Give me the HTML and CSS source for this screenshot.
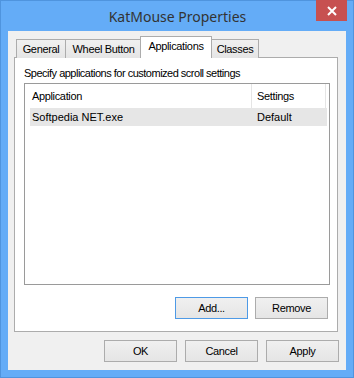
FILE: index.html
```html
<!DOCTYPE html>
<html lang="en">
<head>
    <meta charset="UTF-8">
    <title>KatMouse Properties</title>
    <link rel="stylesheet" href="styles.css">
</head>
<body>
    <div class="window">
        <div class="titlebar">
            <span class="title">KatMouse Properties</span>
            <button class="close-btn" aria-label="Close">
                <svg width="10" height="10" viewBox="0 0 10 10">
                    <path d="M1 1 L9 9 M9 1 L1 9" stroke="#fff" stroke-width="2" fill="none"/>
                </svg>
            </button>
        </div>
        <div class="client">
            <div class="tabs">
                <div class="tab tab-general">General</div>
                <div class="tab tab-wheel">Wheel Button</div>
                <div class="tab tab-apps active">Applications</div>
                <div class="tab tab-classes">Classes</div>
            </div>
            <div class="panel">
                <p class="hint">Specify applications for customized scroll settings</p>
                <div class="listview">
                    <div class="lv-header">
                        <div class="lv-col col-app">Application</div>
                        <div class="lv-col col-set">Settings</div>
                    </div>
                    <div class="lv-row selected">
                        <div class="lv-cell cell-app">Softpedia NET.exe</div>
                        <div class="lv-cell cell-set">Default</div>
                    </div>
                </div>
                <div class="panel-buttons">
                    <button class="btn default">Add...</button>
                    <button class="btn">Remove</button>
                </div>
            </div>
            <div class="dialog-buttons">
                <button class="btn">OK</button>
                <button class="btn">Cancel</button>
                <button class="btn">Apply</button>
            </div>
        </div>
    </div>
</body>
</html>
```

FILE: styles.css
```css
body {
    margin: 0;
    padding: 0;
    font-family: "Liberation Sans", Arial, sans-serif;
    font-size: 11px;
    letter-spacing: -0.35px;
    color: #000;
    background-color: #64acf7;
}
.window {
    width: 354px;
    height: 378px;
    box-sizing: border-box;
    border: 1px solid #4f94de;
    background-color: #64acf7;
    display: flex;
    flex-direction: column;
}
.titlebar {
    position: relative;
    height: 30px;
    display: flex;
    justify-content: center;
    align-items: center;
}
.title {
    font-family: "Noto Sans", sans-serif;
    font-size: 14px;
    letter-spacing: 0;
    color: #333;
    margin-left: 1px;
}
.close-btn {
    position: absolute;
    top: -1px;
    right: 6px;
    width: 31px;
    height: 21px;
    border: none;
    padding: 0;
    background-color: #c75050;
    display: flex;
    justify-content: center;
    align-items: center;
}
.client {
    margin: 0 7px 7px 7px;
    height: 339px;
    background-color: #f0f0f0;
    display: flex;
    flex-direction: column;
}
.tabs {
    display: flex;
    align-items: flex-end;
    height: 21px;
    margin: 6px 0 -1px 8px;
    position: relative;
    z-index: 1;
}
.tab {
    box-sizing: border-box;
    height: 19px;
    border: 1px solid #acacac;
    border-bottom: none;
    background: linear-gradient(#f0f0f0, #e5e5e5);
    display: flex;
    align-items: center;
    justify-content: center;
    padding-bottom: 1px;
}
.tab-general { width: 50px; }
.tab-wheel { width: 77px; margin-left: -1px; }
.tab-apps { width: 72px; }
.tab-classes { width: 48px; margin-left: -1px; }
.tab.active {
    height: 22px;
    background: #fff;
    margin-left: -2px;
    padding-bottom: 4px;
}
.panel {
    box-sizing: border-box;
    width: 324px;
    height: 275px;
    margin-left: 6px;
    border: 1px solid #acacac;
    background-color: #fff;
    padding: 0 7px 12px 9px;
    display: flex;
    flex-direction: column;
}
.hint {
    margin: 9px 0 0 0;
    height: 13px;
    line-height: 13px;
    letter-spacing: -0.5px;
}
.listview {
    box-sizing: border-box;
    margin-top: 3px;
    width: 306px;
    height: 202px;
    border: 1px solid #9a9a9a;
}
.lv-header {
    display: grid;
    grid-template-columns: 227px 74px;
    height: 24px;
}
.lv-col {
    display: flex;
    align-items: center;
    border-right: 1px solid #e5e5e5;
}
.col-app { padding-left: 7px; }
.col-set { padding-left: 5px; }
.lv-row {
    display: grid;
    grid-template-columns: 221px 76px;
    width: 297px;
    height: 18px;
    margin-left: 5px;
    letter-spacing: 0;
}
.lv-row.selected {
    background-color: #e6e6e6;
}
.lv-cell {
    display: flex;
    align-items: center;
}
.cell-app { padding-left: 2px; }
.cell-set { padding-left: 6px; }
.panel-buttons {
    display: flex;
    justify-content: flex-end;
    gap: 7px;
    margin-top: 12px;
    padding-right: 2px;
}
.dialog-buttons {
    display: flex;
    justify-content: flex-end;
    gap: 8px;
    margin-top: 8px;
    padding-right: 7px;
}
.btn {
    box-sizing: border-box;
    width: 73px;
    height: 22px;
    padding: 0;
    font-family: "Liberation Sans", Arial, sans-serif;
    font-size: 11px;
    letter-spacing: -0.35px;
    color: #000;
    border: 1px solid #acacac;
    background: linear-gradient(#f0f0f0, #e5e5e5);
}
.btn.default {
    border-color: #4e9ae6;
}
```
